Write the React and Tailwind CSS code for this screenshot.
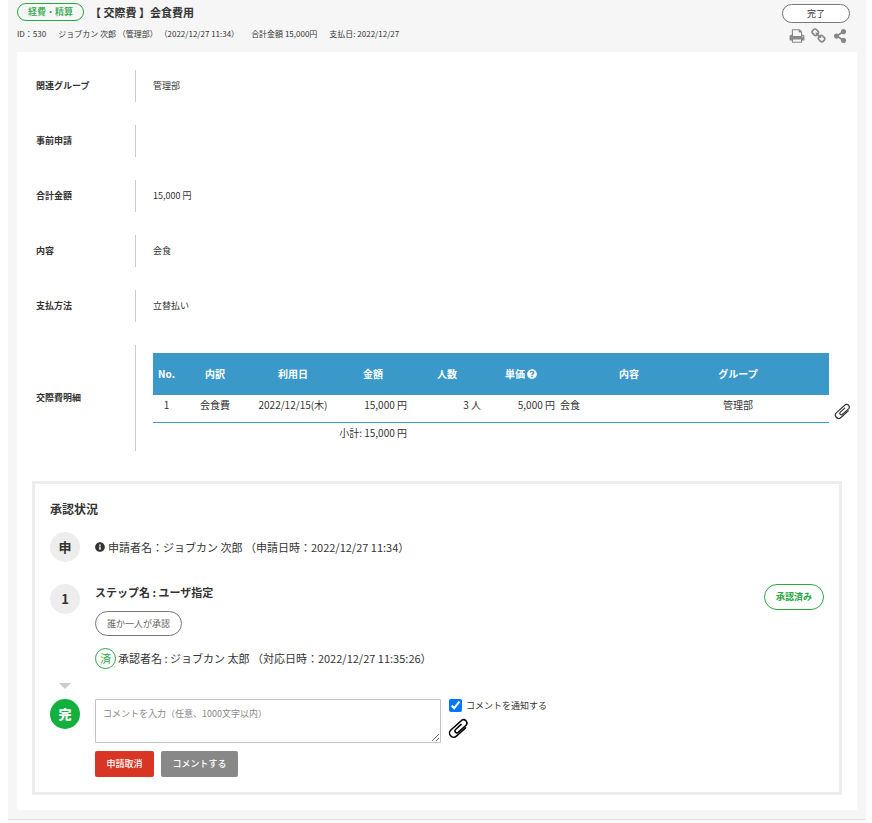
import React from "react";
import { FaShareAlt, FaQuestionCircle, FaInfoCircle } from "react-icons/fa";

function PrintIcon() {
  return (
    <svg viewBox="0 0 1792 1792" className="size-4" fill="currentColor" aria-hidden="true">
      <path d="M448 1536h896v-256h-896v256zm0-640h896v-384h-160q-40 0-68-28t-28-68v-160h-640v640zm1152 64q0-26-19-45t-45-19-45 19-19 45 19 45 45 19 45-19 19-45zm128 0v416q0 13-9.5 22.5t-22.5 9.5h-224v160q0 40-28 68t-68 28h-960q-40 0-68-28t-28-68v-160h-224q-13 0-22.5-9.5t-9.5-22.5v-416q0-79 56.5-135.5t135.5-56.5h64v-544q0-40 28-68t68-28h672q40 0 88 20t76 48l152 152q28 28 48 76t20 88v256h64q79 0 135.5 56.5t56.5 135.5z" />
    </svg>
  );
}

function ChainIcon() {
  return (
    <svg viewBox="0 0 1792 1792" className="size-4" fill="currentColor" aria-hidden="true">
      <path d="M1456 1216q0-40-28-68l-208-208q-28-28-68-28-42 0-72 32 3 3 19 18.5t21.5 21.5 15 19 13 25.5 3.5 27.5q0 40-28 68t-68 28q-15 0-27.5-3.5t-25.5-13-19-15-21.5-21.5-18.5-19q-33 31-33 73 0 40 28 68l206 207q27 27 68 27 40 0 68-26l147-146q28-28 28-67zm-703-705q0-40-28-68l-206-207q-28-28-68-28-39 0-68 27l-147 146q-28 28-28 67 0 40 28 68l208 208q27 27 68 27 42 0 72-31-3-3-19-18.5t-21.5-21.5-15-19-13-25.5-3.5-27.5q0-40 28-68t68-28q15 0 27.5 3.5t25.5 13 19 15 21.5 21.5 18.5 19q33-31 33-73zm895 705q0 120-85 203l-147 146q-83 83-203 83-121 0-204-85l-206-207q-83-83-83-203 0-123 88-209l-88-88q-86 88-208 88-120 0-204-84l-208-208q-84-84-84-204t85-203l147-146q83-83 203-83 121 0 204 85l206 207q83 83 83 203 0 123-88 209l88 88q86-88 208-88 120 0 204 84l208 208q84 84 84 204z" />
    </svg>
  );
}

function ClipIcon({ className }) {
  return (
    <svg viewBox="0 0 20 20" className={className} fill="none" stroke="currentColor" strokeWidth="1.5" strokeLinecap="round" aria-hidden="true">
      <g transform="translate(10 10) rotate(-42) scale(1 -1)">
        <path d="M5 -4.3H-7.4A4.1 4.1 0 0 0 -7.4 3.9H7.8A3.5 3.5 0 0 0 7.8 -2.6H-3.5A1.9 1.9 0 0 0 -3.5 1.2H4" />
      </g>
    </svg>
  );
}

function Row({ label, children }) {
  return (
    <div className="flex">
      <dt className="flex w-[99px] shrink-0 items-center font-bold">{label}</dt>
      <dd className="flex min-h-8 min-w-0 grow items-center border-l border-[#ccc] pl-[17px]">{children}</dd>
    </div>
  );
}

function Details() {
  return (
    <div className="flex grow items-center py-2">
      <table className="grow table-fixed border-separate border-spacing-0 text-center text-[10px] leading-4">
        <colgroup>
          <col className="w-[27px]" />
          <col className="w-[70px]" />
          <col className="w-[86px]" />
          <col className="w-[74px]" />
          <col className="w-[74px]" />
          <col className="w-[74px]" />
          <col />
          <col className="w-[76px]" />
          <col className="w-[53px]" />
        </colgroup>
        <thead>
          <tr className="h-[42px] bg-[#3a99c9] font-black text-white">
            <th>No.</th>
            <th>内訳</th>
            <th>利用日</th>
            <th>金額</th>
            <th>人数</th>
            <th>
              <span className="inline-flex items-center gap-[2px]">
                単価
                <FaQuestionCircle className="size-[10px]" />
              </span>
            </th>
            <th>内容</th>
            <th>グループ</th>
            <td></td>
          </tr>
        </thead>
        <tbody>
          <tr className="h-7 [&>td]:border-b [&>td]:border-[#3a99c9] [&>td]:pb-2">
            <td>1</td>
            <td>会食費</td>
            <td>2022/12/15(木)</td>
            <td className="pr-[3px] text-right">15,000 円</td>
            <td className="pr-[3px] text-right">3 人</td>
            <td className="pr-[3px] text-right">5,000 円</td>
            <td className="pl-[2px] text-left">会食</td>
            <td>管理部</td>
            <td></td>
          </tr>
          <tr className="h-5">
            <td colSpan={4} className="pr-[3px] text-right">小計: 15,000 円</td>
            <td colSpan={5}></td>
          </tr>
        </tbody>
      </table>
      <div className="flex w-7 shrink-0 justify-center pt-[26px]">
        <button type="button" aria-label="添付ファイル" className="text-[#333]">
          <ClipIcon className="size-4 overflow-visible" />
        </button>
      </div>
    </div>
  );
}

function Circle({ children, className }) {
  return (
    <div className={"flex size-[30px] items-center justify-center rounded-full text-[13px] " + className}>
      {children}
    </div>
  );
}

function Approval() {
  return (
    <section className="mx-[15px] mt-[30px] border-[3px] border-[#ededed] px-[15px] pt-[15px] pb-[15px] text-[11px]">
      <h2 className="text-[12px] leading-5 font-bold">承認状況</h2>
      <div className="mt-[13px] flex items-center gap-[15px]">
        <Circle className="bg-[#ededed] font-bold">申</Circle>
        <p className="flex items-center gap-[3px]">
          <FaInfoCircle className="size-[10px]" />
          申請者名：ジョブカン 次郎 （申請日時：2022/12/27 11:34）
        </p>
      </div>
      <div className="mt-[22px] flex gap-[15px]">
        <div className="flex flex-col items-center justify-between">
          <Circle className="bg-[#ededed] font-bold">1</Circle>
          <svg viewBox="0 0 12 6" className="h-[6px] w-3" aria-hidden="true">
            <path d="M0 0H12L6 6Z" fill="#ccc" />
          </svg>
        </div>
        <div className="grow pb-5">
          <h3 className="leading-4 font-bold">ステップ名 : ユーザ指定</h3>
          <span className="mt-[11px] flex h-[25px] w-[87px] items-center justify-center rounded-full border border-[#777] text-[9px] text-[#666]">
            誰か一人が承認
          </span>
          <p className="mt-3 flex items-center gap-[2px]">
            <span className="flex size-[21px] items-center justify-center rounded-full border border-[#28a745] text-[#28a745]">済</span>
            承認者名 : ジョブカン 太郎 （対応日時：2022/12/27 11:35:26）
          </p>
        </div>
        <span className="flex h-[26px] w-[60px] items-center justify-center rounded-full border border-[#28a745] text-[9px] font-bold text-[#28a745]">
          承認済み
        </span>
      </div>
      <div className="mt-[10px] flex gap-[15px]">
        <Circle className="bg-[#14b03e] font-black text-white">完</Circle>
        <div className="grow">
          <div className="flex gap-2">
            <textarea
              aria-label="コメント"
              placeholder="コメントを入力（任意、1000文字以内）"
              className="h-11 w-[346px] rounded-[1px] border border-[#c4c4c4] px-[7px] py-[6px] text-[9px] leading-4 placeholder:text-[#888]"
            />
            <div className="flex flex-col items-start gap-[6px] text-[9px]">
              <label className="flex h-[13px] items-center gap-1">
                <input type="checkbox" defaultChecked className="size-[13px]" />
                コメントを通知する
              </label>
              <button type="button" aria-label="ファイルを添付" className="text-black">
                <ClipIcon className="size-5 overflow-visible" />
              </button>
            </div>
          </div>
          <div className="mt-2 flex gap-[7px] text-[9px] font-medium text-white">
            <button type="button" className="h-[26px] w-[59px] rounded-xs bg-[#d93524]">申請取消</button>
            <button type="button" className="h-[26px] w-[77px] rounded-xs bg-[#888]">コメントする</button>
          </div>
        </div>
      </div>
    </section>
  );
}

export default function App() {
  return (
    <main className="mr-[6px] ml-2 border-b border-[#ddd] bg-[#f6f6f6] px-[9px] pb-[9px] font-['Noto_Sans_CJK_JP',sans-serif] text-[9px] text-[#333]">
      <header className="flex h-[52px] items-start justify-between">
        <div className="pt-[3px]">
          <div className="flex items-center gap-[6px]">
            <span className="flex h-[18px] w-[67px] items-center justify-center rounded-full border border-[#28a745] font-medium text-[#28a745]">
              経費・精算
            </span>
            <h1 className="text-[11px] leading-[18px] font-bold">【 交際費 】会食費用</h1>
          </div>
          <p className="mt-[5px] flex gap-3 text-[8px] leading-4">
            <span>ID：530</span>
            <span>ジョブカン 次郎 （管理部） （2022/12/27 11:34）</span>
            <span>合計金額 15,000円</span>
            <span>支払日: 2022/12/27</span>
          </p>
        </div>
        <div className="flex flex-col items-end gap-[5px] pt-1 pr-[7px]">
          <span className="flex h-[19px] w-[68px] items-center justify-center rounded-full border border-[#777] bg-white">完了</span>
          <div className="flex items-center gap-[6px] pr-[3px] text-[#888]">
            <button type="button" aria-label="印刷"><PrintIcon /></button>
            <button type="button" aria-label="リンク"><ChainIcon /></button>
            <button type="button" aria-label="共有"><FaShareAlt className="size-[14px]" /></button>
          </div>
        </div>
      </header>
      <div className="bg-white pt-[18px] pb-[15px]">
        <dl className="flex flex-col gap-[23px] pl-[19px]">
          <Row label="関連グループ">管理部</Row>
          <Row label="事前申請"></Row>
          <Row label="合計金額">15,000 円</Row>
          <Row label="内容">会食</Row>
          <Row label="支払方法">立替払い</Row>
          <Row label="交際費明細"><Details /></Row>
        </dl>
        <Approval />
      </div>
    </main>
  );
}
